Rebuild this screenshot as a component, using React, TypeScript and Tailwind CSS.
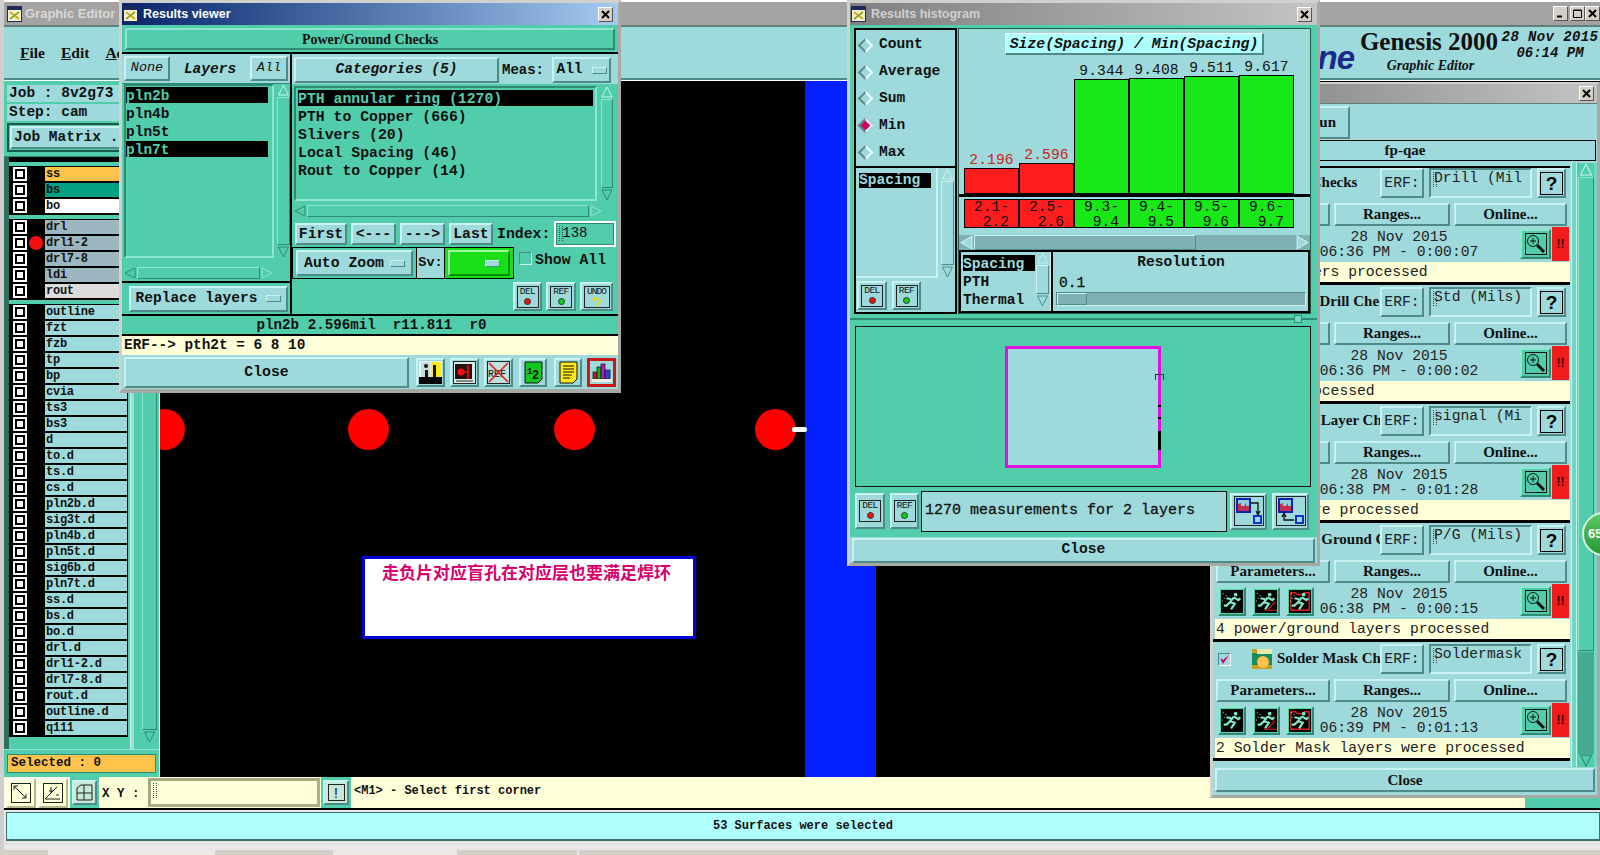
import React from "react";

const raised = "border-2 border-t-[#c9f2f2] border-l-[#c9f2f2] border-b-[#4e8b88] border-r-[#4e8b88]";
const tealRaised = "border-2 border-t-[#8fe6d0] border-l-[#8fe6d0] border-b-[#2f8a74] border-r-[#2f8a74]";
const sunken = "border-2 border-t-[#4e8b88] border-l-[#4e8b88] border-b-[#c9f2f2] border-r-[#c9f2f2]";
const serif = "font-['Liberation_Serif',serif]";
const medium = "font-normal [-webkit-text-stroke:0.3px_#111]";

const Btn = ({ className = "", children }: { className?: string; children?: React.ReactNode }) => (
  <div className={`flex items-center justify-center overflow-hidden bg-[#9edadb] ${raised} ${className}`}>{children}</div>
);

const Notch = () => <span className={`inline-block h-[7px] w-[15px] bg-[#9edadb] ${raised} border-[1px]`} />;

// text cursor drawn in the input boxes
const Caret = () => <span className="absolute left-[2px] top-[2px] h-[15px] w-[4px] border-x border-dotted border-[#444]" />;

// motif window menu glyph used on every title bar
const WinIcon = () => (
  <svg width="15" height="16" viewBox="0 0 15 16" className="shrink-0">
    <rect width="15" height="16" fill="#1c2a55" />
    <rect x="1" y="4" width="13" height="11" fill="#f4f0d8" />
    <path d="M3 6l9 7M12 6l-9 7" stroke="#c8b010" strokeWidth="2" />
    <path d="M3 13l9-7" stroke="#58a040" strokeWidth="1" />
  </svg>
);

const WinBtn = ({ className = "", children }: { className?: string; children: React.ReactNode }) => (
  <div className={`flex h-[15px] w-[15px] items-center justify-center border border-t-white border-l-white border-b-[#555] border-r-[#555] bg-[#d4d0c8] ${className}`}>
    <svg width="9" height="9" viewBox="0 0 9 9">
      {children}
    </svg>
  </div>
);

const CloseX = ({ className = "" }: { className?: string }) => (
  <WinBtn className={className}>
    <path d="M1 1l7 7M8 1l-7 7" stroke="#000" strokeWidth="2" />
  </WinBtn>
);

const VScroll = ({ className = "", light = false }: { className?: string; light?: boolean }) => {
  const c = light ? "#9edadb" : "#52cdac";
  return (
    <div className={`flex flex-col items-stretch ${className}`}>
      <svg viewBox="0 0 12 12" className="h-[12px] w-full shrink-0">
        <path d="M6 1L11 11H1Z" fill={c} stroke="#c9f2f2" strokeWidth="1" />
      </svg>
      <div className={`flex-1 my-[1px] ${light ? raised : tealRaised} border-[1px]`} />
      <svg viewBox="0 0 12 12" className="h-[12px] w-full shrink-0">
        <path d="M6 11L1 1H11Z" fill={c} stroke={light ? "#4e8b88" : "#2f8a74"} strokeWidth="1" />
      </svg>
    </div>
  );
};

const HScroll = ({ className = "" }: { className?: string }) => (
  <div className={`flex items-stretch ${className}`}>
    <svg viewBox="0 0 12 12" className="h-full w-[12px] shrink-0">
      <path d="M1 6L11 1V11Z" fill="#52cdac" stroke="#2f8a74" />
    </svg>
    <div className={`flex-1 mx-[1px] ${tealRaised} border-[1px]`} />
    <svg viewBox="0 0 12 12" className="h-full w-[12px] shrink-0">
      <path d="M11 6L1 1V11Z" fill="#52cdac" stroke="#8fe6d0" />
    </svg>
  </div>
);

const TagBtn = ({ label, dot, className = "" }: { label: string; dot: string; className?: string }) => (
  <Btn className={className}>
    <div className="flex h-[22px] w-[22px] flex-col items-center border border-[#222]">
      <span className="text-[9.5px] leading-[10px] tracking-[-0.6px] text-[#111]">{label}</span>
      <span className="mt-[1px] h-[7px] w-[7px] rounded-full border border-[#333]" style={{ background: dot }} />
    </div>
  </Btn>
);

const UndoBtn = ({ className = "" }: { className?: string }) => (
  <Btn className={className}>
    <div className="flex h-[22px] w-[26px] flex-col items-center border border-[#222]">
      <span className="text-[9.5px] leading-[10px] tracking-[-1px] text-[#111]">UNDO</span>
      <svg width="10" height="10" viewBox="0 0 10 10">
        <path d="M2 2H6C9 2 9 6 6 6M5 6C7 7 6 9 3 9M3 0L1 2L3 4" fill="none" stroke="#e8d820" strokeWidth="1.5" />
      </svg>
    </div>
  </Btn>
);

const Magnifier = ({ className = "" }: { className?: string }) => (
  <div className={`flex items-center justify-center bg-[#52cdac] ${tealRaised} ${className}`}>
    <svg width="22" height="22" viewBox="0 0 22 22">
      <rect x=".5" y=".5" width="21" height="21" fill="none" stroke="#111" />
      <circle cx="8" cy="8" r="5.5" fill="none" stroke="#111" />
      <path d="M8 5v6M5 8h6" stroke="#111" />
      <path d="M12 12l7 7" stroke="#111" strokeWidth="3" />
    </svg>
  </div>
);

const Runner = ({ variant = 0 }: { variant?: number }) => (
  <div className={`flex h-[29px] w-[28px] items-center justify-center bg-[#52cdac] ${tealRaised}`}>
    <svg width="22" height="23" viewBox="0 0 24 25">
      <rect width="24" height="25" fill="#050505" />
      {variant === 2 && <path d="M2 3h5l2 2h6l2-2h5v19H2Z" fill="none" stroke="#e02020" strokeWidth="1.5" />}
      <circle cx="16" cy="5" r="2" fill="#7fe8c8" />
      <path d="M14 8L10 13L15 15L11 21M10 13L6 17H3M14 8L19 11L21 9M11 10L6 9" fill="none" stroke="#7fe8c8" strokeWidth="2.4" />
      <path d="M2 4h1M5 6h1M3 9h1M1 12h1" stroke="#e8fff8" strokeWidth="1" />
      {variant === 1 && <path d="M14 21L22 13M10 22H24" stroke="#e02020" strokeWidth="1.2" />}
    </svg>
  </div>
);

const Help = () => (
  <Btn className="h-[30px] w-[29px]">
    <div className="flex h-[23px] w-[23px] items-center justify-center border border-black font-['Liberation_Sans',sans-serif] text-[19px] font-bold leading-none text-black">?</div>
  </Btn>
);

const ToolIcon = ({ className = "", children }: { className?: string; children: React.ReactNode }) => (
  <Btn className={className}>
    <svg width="23" height="23" viewBox="0 0 23 23">
      {children}
    </svg>
  </Btn>
);

const HistSwap = ({ down }: { down: boolean }) => (
  <Btn className="h-[37px] w-[37px]">
    <svg width="30" height="30" viewBox="0 0 30 30">
      <rect x=".5" y=".5" width="29" height="29" fill="none" stroke="#222" />
      <rect x="3" y="3" width="13" height="13" fill="#c03050" stroke="#1020b0" strokeWidth="2" />
      <path d="M4 4h11v6h-3V7l-2 3H7V7L4 8Z" fill="#8fd0d8" />
      <rect x="20" y="20" width="7" height="7" fill="none" stroke="#1030d0" strokeWidth="2" />
      {down ? (
        <path d="M17 7H24V17M22 15L24 19L26 15" fill="none" stroke="#111" strokeWidth="1.3" />
      ) : (
        <path d="M18 24H8V19M6 21L8 17L10 21" fill="none" stroke="#111" strokeWidth="1.3" />
      )}
    </svg>
  </Btn>
);

const layerGroups: { name: string; bg: string; dot?: boolean }[][] = [
  [
    { name: "ss", bg: "bg-[#ffc24a]" },
    { name: "bs", bg: "bg-[#00a080]" },
    { name: "bo", bg: "bg-white" },
  ],
  [
    { name: "drl", bg: "bg-[#9db7c0]" },
    { name: "drl1-2", bg: "bg-[#9db7c0]", dot: true },
    { name: "drl7-8", bg: "bg-[#9db7c0]" },
    { name: "ldi", bg: "bg-[#9db7c0]" },
    { name: "rout", bg: "bg-[#dcdcdc]" },
  ],
  "outline fzt fzb tp bp cvia ts3 bs3 d to.d ts.d cs.d pln2b.d sig3t.d pln4b.d pln5t.d sig6b.d pln7t.d ss.d bs.d bo.d drl.d drl1-2.d drl7-8.d rout.d outline.d q111"
    .split(" ")
    .map((name) => ({ name, bg: "bg-[#9edadb]" })),
];

const LayerRow = ({ name, bg, dot }: { name: string; bg: string; dot?: boolean }) => (
  <div className="relative flex h-[16px] items-center bg-black">
    <div className="ml-[4px] flex h-[14px] w-[14px] items-center justify-center bg-white">
      <div className="h-[10px] w-[10px] border-2 border-black bg-white" />
    </div>
    {dot && <div className="absolute left-[20px] top-[1px] h-[14px] w-[14px] rounded-full bg-[#f01010]" />}
    <div className={`ml-[18px] h-[14px] w-[82px] pl-[1px] text-[12px] font-bold leading-[14px] tracking-[-0.25px] text-[#111] ${bg}`}>{name}</div>
  </div>
);

const LeftPanel = () => (
  <div className="flex h-full w-[155px] shrink-0 flex-col bg-[#52cdac]">
    <div className="flex h-[76px] shrink-0 flex-col gap-[2px] border-b border-[#2f8a74] bg-[#52cdac] px-[3px] pt-[4px] text-[14.5px] font-bold text-[#111]">
      <div className="h-[17px] whitespace-pre bg-[#9edadb] pl-[2px] leading-[17px]">Job : 8v2g73</div>
      <div className="h-[17px] whitespace-pre bg-[#9edadb] pl-[2px] leading-[17px]">Step: cam</div>
      <div className="border-2 border-[#1c5a4a] bg-[#52cdac] p-[1px]">
        <Btn className="h-[23px] justify-start pl-[2px]">Job Matrix ...</Btn>
      </div>
    </div>
    <div className="flex min-h-0 flex-1">
      <div className="w-[5px] shrink-0 bg-[#2f6f5e]" />
      <div className="flex w-[119px] flex-col">
        <div className="h-[5px] overflow-hidden bg-black" />
        <div className="h-[2px]" />
        {layerGroups.map((g, i) => (
          <div key={i} className={`${i === 0 ? "mt-[2px]" : "mt-[4px]"} flex flex-col bg-black pb-[1px]`}>
            {g.map((r) => (
              <LayerRow key={r.name} {...r} />
            ))}
          </div>
        ))}
      </div>
      <div className="ml-[2px] w-[4px] border-l border-[#c9f2f2] bg-[#8fe6d0]" />
      <div className="ml-[8px] mr-[2px] flex w-[15px] flex-col pb-[6px]">
        <VScroll className="flex-1" />
      </div>
    </div>
    <div className="h-[5px] border-t border-[#8fe6d0]" />
    <div className="mx-[3px] mb-[4px] h-[19px] border border-[#2f8a74] bg-[#ffc24a] pl-[3px] text-[12.5px] font-bold leading-[17px] text-[#111]">Selected : 0</div>
  </div>
);

const Canvas = () => (
  <div className="relative ml-[1px] min-w-0 flex-1 overflow-hidden bg-black">
    <div className="absolute left-[-16px] top-[328px] h-[41px] w-[41px] rounded-full bg-[#ff0000]" />
    <div className="absolute left-[188px] top-[328px] h-[41px] w-[41px] rounded-full bg-[#ff0000]" />
    <div className="absolute left-[394px] top-[328px] h-[41px] w-[41px] rounded-full bg-[#ff0000]" />
    <div className="absolute left-[595px] top-[328px] h-[41px] w-[41px] rounded-full bg-[#ff0000]" />
    <div className="absolute left-[645px] top-[0px] h-[697px] w-[71px] bg-[#0520ff]" />
    <div className="absolute left-[632px] top-[346px] h-[5px] w-[15px] rounded-[2px] bg-white" />
    <div className="absolute left-[202px] top-[475px] h-[83px] w-[334px] border-[3px] border-[#0000d8] bg-white pl-[17px] pt-[2px] font-['Noto_Sans_CJK_SC',sans-serif] text-[17px] font-bold leading-[22px] text-[#d8006c]">
      走负片对应盲孔在对应层也要满足焊环
    </div>
  </div>
);

const BottomBar = () => (
  <div className="flex h-[33px] shrink-0 items-stretch border-b-2 border-black bg-[#ffffd8] text-[#111]">
    <div className="flex pl-[2px] pt-[1px]">
      <Btn className="h-[30px] w-[30px] border-t-white border-l-white border-b-[#b8b890] border-r-[#b8b890] bg-[#ffffd8]">
        <svg width="20" height="20" viewBox="0 0 20 20">
          <rect x=".5" y=".5" width="19" height="19" fill="none" stroke="#222" />
          <path d="M3 3L15 15M11 15h4v-4M3 7V3h4" fill="none" stroke="#222" />
        </svg>
      </Btn>
      <Btn className="ml-[2px] h-[30px] w-[30px] border-t-white border-l-white border-b-[#b8b890] border-r-[#b8b890] bg-[#ffffd8]">
        <svg width="20" height="20" viewBox="0 0 20 20">
          <rect x=".5" y=".5" width="19" height="19" fill="none" stroke="#222" />
          <path d="M2 16H17M2 16L14 4M8 4v6M6 8h4M13 12h3" fill="none" stroke="#222" />
        </svg>
      </Btn>
    </div>
    <div className="ml-[2px] flex w-[29px] items-center justify-center bg-[#52cdac]">
      <Btn className="h-[25px] w-[25px] bg-[#c8e8d8]">
        <svg width="17" height="17" viewBox="0 0 17 17">
          <path d="M1 4L5 1H16V16H1ZM8 1V16M1 9H16" fill="none" stroke="#222" />
        </svg>
      </Btn>
    </div>
    <div className="w-[49px] pl-[3px] pt-[8px] text-[12.5px] font-bold">X Y :</div>
    <div className="relative mt-[1px] h-[29px] w-[172px] border-[3px] border-t-[#a8a880] border-l-[#a8a880] border-b-[#b0b088] border-r-[#b0b088] bg-[#ffffd8]">
      <Caret />
    </div>
    <div className="ml-[1px] flex w-[30px] items-center justify-center bg-[#52cdac]">
      <Btn className="h-[25px] w-[26px] bg-[#c8e8d8]">
        <div className="flex h-[17px] w-[17px] items-center justify-center border border-[#222] font-['Liberation_Sans',sans-serif] text-[14px] leading-none">!</div>
      </Btn>
    </div>
    <div className="flex-1 pl-[3px] pt-[6px] text-[12px] font-bold leading-[16px]">{"<M1> - Select first corner"}</div>
    <div className="flex w-[75px] flex-col bg-[#52cdac]" />
  </div>
);

const MainWindow = () => (
  <div className="flex h-full flex-col border-l-[4px] border-[#cfcfcf]">
    <div className="flex h-[25px] shrink-0 items-center gap-[3px] border-t-[2px] border-white bg-[#a5a3a1] pl-[3px] font-['Liberation_Sans',sans-serif] text-[13px] font-bold text-[#d8d8d8]">
      <WinIcon />
      Graphic Editor 9.0
      <div className="ml-auto flex items-center">
        <WinBtn>
          <path d="M1 7.5H6" stroke="#000" strokeWidth="2" />
        </WinBtn>
        <WinBtn className="ml-[2px]">
          <path d="M.5 1.5H8.5V8.5H.5ZM.5 1H8.5" fill="none" stroke="#000" />
        </WinBtn>
        <CloseX />
      </div>
    </div>
    <div className="flex h-[55px] shrink-0 items-center border-y-[2px] border-t-[#5e7f7a] border-b-[#4e8b88] bg-[#9edadb] text-[#111]">
      <div className={`${serif} flex gap-[16px] pl-[16px] text-[15.5px] font-bold`}>
        <span>
          <span className="underline">F</span>ile
        </span>
        <span>
          <span className="underline">E</span>dit
        </span>
        <span>
          <span className="underline">A</span>ctions
        </span>
      </div>
      <div className="ml-auto flex items-start">
        <span className="mt-[11px] font-['Liberation_Sans',sans-serif] text-[33px] font-bold italic leading-[36px] tracking-[-1px] text-[#1a2a8a]">ne</span>
        <div className={`${serif} ml-[4px] flex w-[142px] flex-col items-center whitespace-nowrap font-bold`}>
          <span className="text-[25px] leading-[26px]">Genesis 2000</span>
          <span className="pl-[3px] pt-[1px] text-[14px] italic leading-[20px]">Graphic Editor</span>
        </div>
        <div className="flex w-[100px] flex-col items-center whitespace-nowrap text-[14px] font-bold italic leading-[16px]">
          <span className="tracking-[0.4px]">28 Nov 2015</span>
          <span>06:14 PM</span>
        </div>
      </div>
    </div>
    <div className="flex h-[697px] shrink-0 border-t border-white">
      <LeftPanel />
      <Canvas />
    </div>
    <BottomBar />
    <div className="ml-[2px] mt-[2px] flex h-[29px] shrink-0 items-center justify-center border-[1px] border-b-[2px] border-[#3e6e6a] bg-[#b0ffff] text-[12px] font-bold text-[#111]">
      53 Surfaces were selected
    </div>
    <div className="h-[5px] bg-[#e4e4e4]" />
  </div>
);

const ViewerIcons = () => (
  <div className="ml-[7px] flex items-center gap-[5px]">
    <ToolIcon className="h-[29px] w-[29px]">
      <rect width="23" height="23" fill="#e8f4f0" />
      <rect x="12" y="1" width="10" height="16" fill="#ffe820" />
      <rect y="16" width="23" height="7" fill="#000" />
      <path d="M2 1h9v15H2z" fill="#c8ddd8" />
      <circle cx="7" cy="5" r="2" fill="#111" />
      <path d="M6 9h3v7H6zM14 4h3v12h-3z" fill="#111" />
    </ToolIcon>
    <ToolIcon className="h-[29px] w-[29px]">
      <rect x=".5" y=".5" width="22" height="22" fill="#d8eeea" stroke="#222" />
      <rect x="2" y="3" width="17" height="15" fill="#2a1010" />
      <circle cx="8" cy="11" r="3.5" fill="#f01010" />
      <path d="M9 11H15M15 4V18" stroke="#f01010" strokeWidth="1.6" />
      <path d="M3 20H20" stroke="#222" />
    </ToolIcon>
    <ToolIcon className="h-[29px] w-[29px]">
      <rect x=".5" y=".5" width="22" height="22" fill="#bfe0dc" stroke="#222" />
      <text x="1" y="16" fontSize="10" fontFamily="Liberation Mono" fill="#111">REF</text>
      <path d="M2 2L21 21M21 2L2 21" stroke="#d82020" strokeWidth="1.6" />
    </ToolIcon>
    <ToolIcon className="ml-[1px] h-[29px] w-[28px]">
      <path d="M3 1H20V18L16 22H3Z" fill="#10c820" stroke="#111" />
      <text x="5" y="13" fontSize="9" fontWeight="bold" fontFamily="Liberation Mono" fill="#111">1</text>
      <text x="10" y="18" fontSize="12" fontWeight="bold" fontFamily="Liberation Mono" fill="#111">2</text>
    </ToolIcon>
    <ToolIcon className="ml-[2px] h-[29px] w-[28px]">
      <path d="M3 1H20V18L16 22H3Z" fill="#ffe820" stroke="#111" />
      <path d="M6 5H17M6 8H17M6 11H17M6 14H15M6 17H13" stroke="#111" />
    </ToolIcon>
    <div className="flex h-[29px] w-[29px] items-center justify-center border-[3px] border-[#c81818] bg-[#9edadb]">
      <svg width="20" height="20" viewBox="0 0 20 20">
        <rect x="1" y="10" width="4" height="7" fill="#c02020" stroke="#111" strokeWidth=".7" />
        <rect x="5" y="5" width="4" height="12" fill="#10b020" stroke="#111" strokeWidth=".7" />
        <rect x="9" y="2" width="4" height="15" fill="#c018c0" stroke="#111" strokeWidth=".7" />
        <rect x="13" y="8" width="5" height="9" fill="#3040d0" stroke="#111" strokeWidth=".7" />
        <rect y="17" width="20" height="3" fill="#f0f0e0" />
      </svg>
    </div>
  </div>
);

const ResultsViewer = () => (
  <div className="absolute left-[119px] top-0 flex h-[393px] w-[502px] flex-col border-[3px] border-b-[4px] border-[#d0d0cc] border-r-[#a8a8a4] border-b-[#a8a8a4] text-[#111]">
    <div className="flex h-[22px] shrink-0 items-center bg-gradient-to-r from-[#0a246a] to-[#a6caf0] pl-[1px] pr-[5px] font-['Liberation_Sans',sans-serif] text-[12.5px] font-bold text-white">
      <WinIcon />
      <span className="ml-[5px]">Results viewer</span>
      <CloseX className="ml-auto" />
    </div>
    <div className="flex h-[27px] shrink-0 flex-col bg-[#52cdac] px-[3px] pt-[3px]">
      <div className={`${serif} flex h-[22px] items-center justify-center text-[14px] font-bold ${tealRaised}`}>Power/Ground Checks</div>
    </div>
    <div className="h-[2px] shrink-0 bg-black" />
    <div className="flex h-[260px] shrink-0 bg-[#52cdac]">
      <div className="flex w-[170px] shrink-0 flex-col border-r-[2px] border-black">
        <div className="flex h-[30px] items-start justify-between border-b border-[#2f8a74] bg-[#9edadb] px-[2px] pt-[2px] text-[13.5px] italic">
          <Btn className="h-[25px] w-[46px]">None</Btn>
          <span className="pt-[3px] text-[14.5px] font-bold">Layers</span>
          <Btn className="h-[25px] w-[38px]">All</Btn>
        </div>
        <div className="flex h-[183px] pl-[2px]">
          <div className="flex h-[174px] w-[150px] flex-col border-2 border-t-[#2f8a74] border-l-[#2f8a74] border-b-[#8fe6d0] border-r-[#8fe6d0] pt-[1px] text-[14.5px] font-bold leading-[18px]">
            {["pln2b", "pln4b", "pln5t", "pln7t"].map((l, i) => (
              <div key={l} className={i === 0 || i === 3 ? "mr-[4px] mb-[2px] h-[16px] bg-black text-[#52cdac]" : "h-[18px]"}>
                {l}
              </div>
            ))}
          </div>
          <VScroll className="ml-[3px] h-[174px] w-[13px]" />
        </div>
        <HScroll className="mb-[2px] ml-[2px] mr-[17px] h-[12px] shrink-0" />
        <div className="flex flex-1 items-center border-t-[2px] border-black bg-[#52cdac] pl-[7px]">
          <Btn className="h-[26px] w-[159px] gap-[9px]">
            <span className="text-[14.5px] font-bold">Replace layers</span>
            <Notch />
          </Btn>
        </div>
      </div>
      <div className="flex min-w-0 flex-1 flex-col">
        <div className="flex h-[30px] items-center bg-[#9edadb] pl-[2px] pr-[4px] pt-[2px]">
          <Btn className="h-[26px] w-[205px] text-[14.5px] font-bold italic">Categories (5)</Btn>
          <span className="ml-[3px] text-[14px] font-bold">Meas:</span>
          <Btn className="ml-[8px] h-[26px] w-[59px] gap-[9px] text-[14.5px] font-bold">
            All
            <Notch />
          </Btn>
        </div>
        <div className="mt-[2px] flex h-[119px] shrink-0 pl-[2px] pr-[4px]">
          <div className="h-[115px] w-[303px] border-2 border-t-[#2f8a74] border-l-[#2f8a74] border-b-[#8fe6d0] border-r-[#8fe6d0] pl-[2px] pt-[2px] text-[14.8px] font-bold leading-[18px]">
            <div className="mr-[2px] mb-[2px] h-[16px] bg-black text-[#52cdac]">PTH annular ring (1270)</div>
            <div>PTH to Copper (666)</div>
            <div>Slivers (20)</div>
            <div>Local Spacing (46)</div>
            <div>Rout to Copper (14)</div>
          </div>
          <VScroll className="ml-[4px] h-[115px] w-[12px]" />
        </div>
        <HScroll className="ml-[2px] mr-[16px] h-[12px] shrink-0" />
        <div className="mt-[4px] flex h-[26px] shrink-0 items-center pl-[3px] text-[14.8px] font-bold">
          <Btn className="h-[22px] w-[52px]">First</Btn>
          <Btn className="ml-[4px] h-[22px] w-[45px]">{"<---"}</Btn>
          <Btn className="ml-[4px] h-[22px] w-[45px]">{"--->"}</Btn>
          <Btn className="ml-[4px] h-[22px] w-[44px]">Last</Btn>
          <span className="ml-[4px]">Index:</span>
          <div className="ml-[4px] h-[26px] w-[62px] border-[2px] border-white bg-[#52cdac]">
            <div className="relative h-full border border-[#2f8a74] pl-[5px] text-[14px] font-normal leading-[18px]">
              <Caret />
              138
            </div>
          </div>
        </div>
        <div className="flex h-[32px] shrink-0 items-stretch text-[14.8px] font-bold">
          <div className="flex w-[125px] items-center justify-center border border-black bg-[#52cdac]">
            <Btn className="h-[26px] w-[117px] gap-[6px]">
              Auto Zoom
              <Notch />
            </Btn>
          </div>
          <div className="flex w-[27px] items-center justify-center border-y border-black bg-[#9edadb] text-[13.5px]">Sv:</div>
          <div className="flex w-[70px] items-center justify-center border border-black bg-[#18e018]">
            <div className="flex h-[26px] w-[62px] items-center justify-end border-2 border-t-[#a0f8a0] border-l-[#a0f8a0] border-b-[#0a8a0a] border-r-[#0a8a0a] pr-[8px]">
              <span className="inline-block h-[7px] w-[15px] border border-t-[#c9f2f2] border-l-[#c9f2f2] border-b-[#4e8b88] border-r-[#4e8b88] bg-[#9edadb]" />
            </div>
          </div>
          <div className="ml-[5px] flex items-start gap-[3px] pt-[2px]">
            <div className={`mt-[3px] h-[13px] w-[13px] ${sunken} border-[1px]`} />
            <span>Show All</span>
          </div>
        </div>
        <div className="flex flex-1 items-start justify-end gap-[4px] pr-[5px] pt-[3px]">
          <TagBtn label="DEL" dot="#ef1010" className="h-[29px] w-[29px]" />
          <TagBtn label="REF" dot="#10d010" className="h-[29px] w-[30px]" />
          <UndoBtn className="h-[29px] w-[33px]" />
        </div>
      </div>
    </div>
    <div className="h-[2px] shrink-0 bg-black" />
    <div className="flex h-[18px] shrink-0 items-center justify-center whitespace-pre bg-[#52cdac] pl-[3px] text-[14.2px] font-bold leading-none">pln2b 2.596mil  r11.811  r0</div>
    <div className="h-[2px] shrink-0 bg-black" />
    <div className="h-[19px] shrink-0 whitespace-pre bg-[#ffffd8] pl-[2px] text-[14.4px] font-bold leading-[19px]">ERF--&gt; pth2t = 6 8 10</div>
    <div className="flex flex-1 items-center bg-[#9edadb] pl-[2px]">
      <Btn className="h-[31px] w-[285px] text-[14.8px] font-bold">Close</Btn>
      <ViewerIcons />
    </div>
  </div>
);

const radios = ["Count", "Average", "Sum", "Min", "Max"];
const bars = [
  { v: "2.196", h: "h-[26px]", c: "bg-[#ff1c1c]", t: "text-[#d02020]", a: "2.1-", b: "2.2" },
  { v: "2.596", h: "h-[31px]", c: "bg-[#ff1c1c]", t: "text-[#d02020]", a: "2.5-", b: "2.6" },
  { v: "9.344", h: "h-[115px]", c: "bg-[#18e818]", t: "text-[#111]", a: "9.3-", b: "9.4" },
  { v: "9.408", h: "h-[116px]", c: "bg-[#18e818]", t: "text-[#111]", a: "9.4-", b: "9.5" },
  { v: "9.511", h: "h-[118px]", c: "bg-[#18e818]", t: "text-[#111]", a: "9.5-", b: "9.6" },
  { v: "9.617", h: "h-[119px]", c: "bg-[#18e818]", t: "text-[#111]", a: "9.6-", b: "9.7" },
];

const Histogram = () => (
  <div className="absolute left-[847px] top-0 flex h-[566px] w-[473px] flex-col border-[3px] border-[#d0d0cc] border-r-[#a8a8a4] border-b-[#a8a8a4] text-[#111]">
    <div className="flex h-[22px] shrink-0 items-center bg-gradient-to-r from-[#808080] to-[#c4c4c4] pl-[1px] pr-[5px] font-['Liberation_Sans',sans-serif] text-[12.5px] font-bold text-[#d0d0d0]">
      <WinIcon />
      <span className="ml-[5px]">Results histogram</span>
      <CloseX className="ml-auto" />
    </div>
    <div className="flex h-[290px] shrink-0 bg-[#52cdac] pl-[4px] pt-[3px]">
      <div className="flex h-[286px] w-[103px] shrink-0 flex-col border-2 border-black bg-[#9edadb]">
        <div className="flex h-[138px] shrink-0 flex-col justify-around border-b-2 border-black pl-[3px] pt-[2px] text-[14.6px] font-bold">
          {radios.map((r) => (
            <div key={r} className="flex items-center gap-[8px]">
              <span className={`ml-[1px] h-[11px] w-[11px] rotate-45 border-2 border-t-[#e8ffff] border-l-[#5a8a88] border-b-[#5a8a88] border-r-[#e8ffff] ${r === "Min" ? "bg-[#d00060]" : ""}`} />
              <span>{r}</span>
            </div>
          ))}
        </div>
        <div className="flex h-[112px] shrink-0">
          <div className="h-[110px] w-[82px] border-b-2 border-r-2 border-[#c9f2f2] pl-[3px] pt-[5px]">
            <div className="h-[15px] w-[72px] bg-black text-[14.6px] font-bold leading-[15px] text-[#9edadb]">Spacing</div>
          </div>
          <VScroll light className="ml-[3px] h-[110px] w-[13px]" />
        </div>
        <div className="flex gap-[5px] pl-[1px] pt-[1px]">
          <TagBtn label="DEL" dot="#ef1010" className="h-[29px] w-[30px]" />
          <TagBtn label="REF" dot="#10d010" className="h-[29px] w-[29px]" />
        </div>
      </div>
      <div className="ml-[1px] flex h-[286px] w-[353px] shrink-0 flex-col border border-[#1c5a4a] bg-[#9edadb]">
        <div className="flex h-[28px] shrink-0 justify-center pt-[4px]">
          <div className="h-[22px] w-[259px] border border-b-2 border-r-2 border-t-white border-l-white border-b-[#4e8b88] border-r-[#4e8b88] bg-[#b0ffff] text-center text-[14.8px] font-bold italic leading-[21px]">
            Size(Spacing) / Min(Spacing)
          </div>
        </div>
        <div className="flex h-[137px] shrink-0 items-end pl-[5px]">
          {bars.map((b) => (
            <div key={b.v} className="flex w-[55px] flex-col items-center">
              <span className={`text-[14.6px] leading-[15px] tracking-[0.1px] ${b.t}`}>{b.v}</span>
              <div className={`w-full border border-black ${b.c} ${b.h}`} />
            </div>
          ))}
        </div>
        <div className="h-[3px] shrink-0 bg-black" />
        <div className="mt-[2px] flex h-[29px] shrink-0 pl-[5px]">
          {bars.map((b) => (
            <div key={b.a} className={`h-[29px] w-[55px] overflow-hidden whitespace-pre border border-black pr-[9px] text-right text-[14.6px] leading-[15px] ${b.c}`}>
              {b.a}
              {"\n"}
              {b.b}
            </div>
          ))}
        </div>
        <div className="mt-[7px] flex h-[15px] shrink-0 items-stretch bg-[#7fb0b2] px-[1px]">
          <svg viewBox="0 0 12 14" className="h-full w-[13px] shrink-0">
            <path d="M1 7L11 1V13Z" fill="#9edadb" stroke="#c9f2f2" />
          </svg>
          <div className={`ml-[1px] w-[222px] ${raised} border-[1px]`} />
          <svg viewBox="0 0 12 14" className="ml-auto h-full w-[13px] shrink-0">
            <path d="M11 7L1 1V13Z" fill="#9edadb" stroke="#c9f2f2" />
          </svg>
        </div>
        <div className="flex min-h-0 flex-1 border-2 border-black">
          <div className="flex w-[90px] shrink-0 border-r border-[#c9f2f2]">
            <div className="mr-[1px] w-[74px] pl-[2px] pt-[3px] text-[14.6px] font-bold leading-[18px]">
              <div className="mb-[2px] h-[16px] bg-black text-[#9edadb]">Spacing</div>
              <div>PTH</div>
              <div>Thermal</div>
            </div>
            <VScroll light className="h-[55px] w-[13px]" />
          </div>
          <div className="flex flex-1 flex-col border-l-2 border-black pl-[3px] pr-[2px]">
            <div className="text-center text-[14.6px] font-bold leading-[20px]">Resolution</div>
            <div className={`pl-[3px] pt-[3px] text-[14.6px] leading-[17px] ${medium}`}>0.1</div>
            <div className={`flex h-[14px] items-stretch bg-[#7fb0b2] ${sunken} border-[1px]`}>
              <div className={`w-[30px] ${raised} border-[1px]`} />
            </div>
          </div>
        </div>
      </div>
    </div>
    <div className="relative h-[11px] shrink-0 bg-[#52cdac]">
      <div className="mt-[3px] h-[2px] bg-[#2f8a74]" />
      <div className="absolute right-[15px] top-[0px] h-[8px] w-[8px] border border-[#2f8a74] bg-[#70d8c0]" />
    </div>
    <div className="flex h-[211px] shrink-0 flex-col bg-[#52cdac] pl-[5px] pr-[6px]">
      <div className="flex h-[161px] shrink-0 items-center justify-center border border-[#111]">
        <div className="relative h-[122px] w-[156px] border-[3px] border-[#e010e0] bg-[#9edadb]">
          <div className="absolute right-[-3px] top-[82px] h-[19px] w-[3px] bg-black" />
          <div className="absolute right-[-3px] top-[56px] h-[2px] w-[3px] bg-black" />
          <div className="absolute right-[-3px] top-[68px] h-[2px] w-[3px] bg-black" />
          <div className="absolute right-[-6px] top-[25px] h-[6px] w-[9px] border border-b-0 border-[#333]" />
        </div>
      </div>
      <div className="mt-[3px] flex h-[42px] items-center">
        <TagBtn label="DEL" dot="#ef1010" className="h-[36px] w-[30px]" />
        <TagBtn label="REF" dot="#10d010" className="ml-[5px] h-[36px] w-[29px]" />
        <div className={`ml-[2px] flex h-[41px] w-[306px] items-center border border-[#111] bg-[#9edadb] pl-[3px] text-[15px] ${medium}`}>1270 measurements for 2 layers</div>
        <div className="ml-[3px] flex gap-[5px]">
          <HistSwap down />
          <HistSwap down={false} />
        </div>
      </div>
    </div>
    <div className="flex flex-1 items-center bg-[#9edadb] px-[2px]">
      <Btn className="h-[25px] w-full text-[14.6px] font-bold">Close</Btn>
    </div>
  </div>
);

const checks = [
  { l: "Drill Checks", e: "Drill (Mil", d: "06:36 PM - 0:00:07", m: "3 drill layers processed" },
  { l: "Route/Drill Che", e: "Std (Mils)", d: "06:36 PM - 0:00:02", m: "2 layers processed" },
  { l: "Signal Layer Ch", e: "signal (Mi", d: "06:38 PM - 0:01:28", m: "4 layers were processed" },
  { l: "Power Ground C", e: "P/G (Mils)", d: "06:38 PM - 0:00:15", m: "4 power/ground layers processed" },
  { l: "Solder Mask Ch", e: "Soldermask", d: "06:39 PM - 0:01:13", m: "2 Solder Mask layers were processed" },
];

const CheckRow = ({ l, e, d, m }: { l: string; e: string; d: string; m: string }) => (
  <div className="flex h-[119px] shrink-0 flex-col">
    <div className="flex h-[30px] shrink-0 items-center">
      <div className="ml-[5px] flex h-[13px] w-[13px] items-center justify-center border border-t-[#4e8b88] border-l-[#4e8b88] border-b-white border-r-white">
        <svg width="11" height="11" viewBox="0 0 11 11">
          <path d="M1 4L4 10L10 1L4 6Z" fill="#c00070" />
        </svg>
      </div>
      <svg width="20" height="20" viewBox="0 0 20 20" className="ml-[21px] shrink-0">
        <rect width="20" height="20" fill="#c8a020" />
        <rect y="4" width="20" height="12" fill="#1a8a5a" />
        <rect x="5" y="0" width="15" height="5" fill="#e8e8b0" />
        <circle cx="11" cy="13" r="6" fill="#ffc24a" />
      </svg>
      <div className={`${serif} ml-[5px] -mt-[2px] w-[103px] overflow-hidden whitespace-pre text-[15px] font-bold`}>{l}</div>
      <Btn className="h-[30px] w-[44px] text-[14.7px] text-[#222]">ERF:</Btn>
      <div className={`relative ml-[5px] h-[30px] w-[103px] overflow-hidden whitespace-pre pl-[3px] text-[14.7px] leading-[16px] text-[#222] ${sunken}`}>
        <Caret />
        {e}
      </div>
      <div className="ml-[5px]">
        <Help />
      </div>
    </div>
    <div className={`${serif} mt-[5px] flex h-[23px] shrink-0 gap-[4px] pl-[3px] text-[15px] font-bold`}>
      <Btn className="w-[114px]">Parameters...</Btn>
      <Btn className="w-[116px]">Ranges...</Btn>
      <Btn className="w-[113px]">Online...</Btn>
    </div>
    <div className="flex h-[36px] shrink-0 items-center">
      <div className="ml-[5px] flex gap-[6px]">
        <Runner />
        <Runner variant={1} />
        <Runner variant={2} />
      </div>
      <div className="ml-[4px] flex w-[162px] flex-col items-center pt-[1px] text-[14.7px] leading-[15px] text-[#222]">
        <span>28 Nov 2015</span>
        <span>{d}</span>
      </div>
      <Magnifier className="ml-[40px] h-[30px] w-[31px]" />
      <div className="ml-[1px] flex h-[34px] w-[17px] items-center justify-center bg-[#f01c1c] font-['Liberation_Sans',sans-serif] text-[12px] font-bold leading-none text-[#400]">!!</div>
    </div>
    <div className="ml-[2px] h-[20px] shrink-0 overflow-hidden whitespace-pre bg-[#ffffd8] pl-[1px] pt-[1px] text-[14.7px] leading-[19px] text-[#222]">{m}</div>
    <div className="h-[3px] shrink-0 bg-black" />
  </div>
);

const ChecksWindow = () => (
  <div className="absolute left-[1210px] top-[82px] flex h-[716px] w-[390px] flex-col border-[3px] border-t-[2px] border-[#d0d0cc] border-b-[#a8a8a4] border-r-[#a8a8a4] bg-[#9edadb] text-[#111]">
    <div className="flex h-[19px] shrink-0 items-center justify-end bg-gradient-to-r from-[#808080] to-[#c4c4c4] pr-[3px]">
      <CloseX />
    </div>
    <div className="flex h-[37px] shrink-0 items-center border-t border-[#5e7f7a] pl-[2px]">
      <Btn className={`${serif} h-[33px] w-[135px] justify-end pr-[12px] text-[15px] font-bold`}>Run</Btn>
    </div>
    <div className={`${serif} mx-[1px] flex h-[21px] shrink-0 items-center justify-center border border-black text-[15px] font-bold`}>fp-qae</div>
    <div className="flex min-h-0 flex-1 pt-[2px]">
      <div className="mt-[3px] flex h-[597px] w-[357px] shrink-0 flex-col border-t-2 border-black">
        {checks.map((c) => (
          <CheckRow key={c.l} {...c} />
        ))}
      </div>
      <div className="ml-[1px] flex h-[604px] flex-1 bg-[#52cdac]">
        <div className="w-[6px] border-x border-[#c9f2f2] bg-[#70d8c0]" />
        <div className="ml-[1px] flex flex-1 flex-col">
          <svg viewBox="0 0 12 12" className="h-[13px] w-full shrink-0">
            <path d="M6 1L11 11H1Z" fill="#52cdac" stroke="#c9f2f2" />
          </svg>
          <div className={`my-[1px] h-[474px] shrink-0 ${tealRaised} border-[1px]`} />
          <div className="flex-1 bg-[#44ac92]" />
          <svg viewBox="0 0 12 12" className="h-[13px] w-full shrink-0">
            <path d="M6 11L1 1H11Z" fill="#52cdac" stroke="#2f8a74" />
          </svg>
        </div>
        <div className="w-[3px] bg-[#70d8c0]" />
      </div>
    </div>
    <div className="flex h-[30px] shrink-0 items-center px-[2px]">
      <Btn className={`${serif} h-[24px] w-full text-[15px] font-bold`}>Close</Btn>
    </div>
  </div>
);

const TaskBar = () => (
  <div className="absolute bottom-0 left-0 flex h-[5px] w-full gap-[2px] bg-[#e8e8e8]">
    <div className="w-[48px] bg-[#d4d0c8]" />
    <div className="w-[163px] bg-[#ece9e2]" />
    <div className="w-[118px] bg-[#d4d0c8]" />
    <div className="ml-[2px] w-[118px] bg-[#ece9e2]" />
    <div className="w-[120px] bg-[#d4d0c8]" />
    <div className="flex-1 bg-[#d4d0c8]" />
  </div>
);

export default function App() {
  return (
    <div className="relative h-[855px] w-[1600px] overflow-hidden bg-[#e8e8e8] font-['Liberation_Mono',monospace]">
      <MainWindow />
      <ChecksWindow />
      <Histogram />
      <ResultsViewer />
      <div className="absolute left-[1582px] top-[512px] flex h-[44px] w-[44px] items-center rounded-full border-2 border-[#d8f0d8] bg-gradient-to-b from-[#58c860] to-[#289838] pl-[4px] font-['Liberation_Sans',sans-serif] text-[13px] font-bold text-white">
        65
      </div>
      <TaskBar />
    </div>
  );
}
